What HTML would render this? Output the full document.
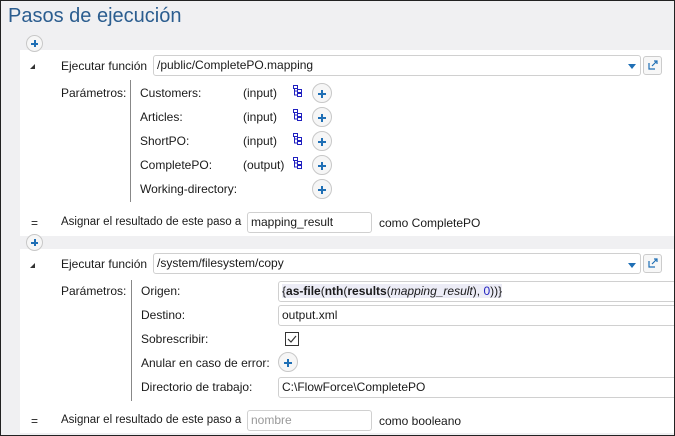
<!DOCTYPE html>
<html><head><meta charset="utf-8"><style>
*{margin:0;padding:0;box-sizing:border-box}
body{width:675px;height:436px;overflow:hidden;background:#f0f0f2;font-family:"Liberation Sans",sans-serif;font-size:12px;color:#1a1a1a;position:relative}
.frame{position:absolute;left:0;top:0;width:675px;height:436px;border:1px solid #222;pointer-events:none;z-index:9}
.a{position:absolute;white-space:nowrap}
.title{left:8px;top:5px;font-size:20px;color:#2b5d8f}
.panel{position:absolute;left:20px;width:655px;background:#fff}
.inp{position:absolute;background:#fff;border:1px solid #d0d0d0;border-radius:3px;padding-left:3px;line-height:19px;font-size:12px}
.pl{position:absolute;width:20px;height:20px;border:1px solid #c8c8c8;border-radius:50%;background:#f6f6f6}
.pl::before{content:"";position:absolute;left:5px;top:8.5px;width:8px;height:2px;background:#1f6fb5}
.pl::after{content:"";position:absolute;left:8px;top:5.5px;width:2px;height:8px;background:#1f6fb5}
.sm{width:17px;height:17px}
.sm::before{left:4px;top:6.5px;width:7px}
.sm::after{left:6.5px;top:4px;height:7px}
.vl{position:absolute;width:1px;background:#888}
.tri{position:absolute;width:0;height:0;border-left:5px solid transparent;border-bottom:5px solid #333}
.lnk{position:absolute;width:19px;height:19px;border:1px solid #ccc;border-radius:3px;background:#f7f7f7}
.dd{position:absolute;width:0;height:0;border-left:4px solid transparent;border-right:4px solid transparent;border-top:5px solid #1f6fb5}
.as{font-size:11.5px}
</style></head><body>
<div class="frame"></div>
<div class="a title">Pasos de ejecución</div>

<div class="panel" style="top:50px;height:186px"></div>
<div class="panel" style="top:249px;height:184px"></div>

<div class="pl sm" style="left:26px;top:35px"></div>
<div class="pl sm" style="left:26px;top:234px"></div>

<!-- step 1 -->
<div class="tri" style="left:30px;top:64px"></div>
<div class="a" style="left:61px;top:59px">Ejecutar función</div>
<div class="inp" style="left:153px;top:55px;width:488px;height:21px">/public/CompletePO.mapping</div>
<div class="dd" style="left:628px;top:64px"></div>
<div class="lnk" style="left:643px;top:56px"><svg width="17" height="17" viewBox="0 0 17 17"><path d="M5 6v6h6M8 9l5-5M10 4h3v3" stroke="#1f6fb5" fill="none" stroke-width="1.2"/></svg></div>
<div class="a" style="left:61px;top:86px">Parámetros:</div>
<div class="vl" style="left:130px;top:80px;height:122px"></div>
<div class="a" style="left:140px;top:86px">Customers:</div>
<div class="a" style="left:140px;top:110px">Articles:</div>
<div class="a" style="left:140px;top:134px">ShortPO:</div>
<div class="a" style="left:140px;top:158px">CompletePO:</div>
<div class="a" style="left:140px;top:182px">Working-directory:</div>
<div class="a" style="left:243px;top:86px">(input)</div>
<div class="a" style="left:243px;top:110px">(input)</div>
<div class="a" style="left:243px;top:134px">(input)</div>
<div class="a" style="left:243px;top:158px">(output)</div>
<svg class="a" style="left:292px;top:85px" width="11" height="95" viewBox="0 0 11 95">
<g fill="none" stroke="#2020c0" stroke-width="1"><g id="t"><rect x="1.5" y="0.5" width="4" height="3"/><rect x="5.5" y="4.5" width="4" height="3"/><rect x="5.5" y="8.5" width="4" height="3"/><path d="M2.5 3.5v6.5h3M2.5 6h3"/></g>
<use href="#t" y="24"/><use href="#t" y="48"/><use href="#t" y="72"/></g></svg>
<div class="pl" style="left:312px;top:83px"></div>
<div class="pl" style="left:312px;top:107px"></div>
<div class="pl" style="left:312px;top:131px"></div>
<div class="pl" style="left:312px;top:155px"></div>
<div class="pl" style="left:312px;top:179px"></div>
<div class="a" style="left:31px;top:216px">=</div>
<div class="a as" style="left:61px;top:216px">Asignar el resultado de este paso a</div>
<div class="inp" style="left:247px;top:212px;width:125px;height:21px">mapping_result</div>
<div class="a" style="left:379px;top:216px">como CompletePO</div>

<!-- step 2 -->
<div class="tri" style="left:30px;top:263px"></div>
<div class="a" style="left:61px;top:257px">Ejecutar función</div>
<div class="inp" style="left:153px;top:253px;width:488px;height:21px">/system/filesystem/copy</div>
<div class="dd" style="left:628px;top:263px"></div>
<div class="lnk" style="left:643px;top:254px"><svg width="17" height="17" viewBox="0 0 17 17"><path d="M5 6v6h6M8 9l5-5M10 4h3v3" stroke="#1f6fb5" fill="none" stroke-width="1.2"/></svg></div>
<div class="a" style="left:61px;top:284px">Parámetros:</div>
<div class="vl" style="left:131px;top:280px;height:121px"></div>
<div class="a" style="left:141px;top:284px">Origen:</div>
<div class="a" style="left:141px;top:308px">Destino:</div>
<div class="a" style="left:141px;top:332px">Sobrescribir:</div>
<div class="a" style="left:141px;top:356px">Anular en caso de error:</div>
<div class="a" style="left:141px;top:380px">Directorio de trabajo:</div>
<div class="inp" style="left:278px;top:281px;width:400px;height:21px"><span style="background:#ececf6">{<b>as-file</b>(<b>nth</b>(<b>results</b>(<i>mapping_result</i>), <span style="color:#2020c0">0</span>))}</span></div>
<div class="inp" style="left:278px;top:305px;width:400px;height:21px">output.xml</div>
<div class="a" style="left:285px;top:332px;width:14px;height:14px;border:1px solid #333;background:#fff"><svg width="12" height="12" viewBox="0 0 12 12"><path d="M2 6l3 3 5-6" stroke="#333" fill="none" stroke-width="1.2"/></svg></div>
<div class="pl" style="left:278px;top:352px"></div>
<div class="inp" style="left:278px;top:377px;width:400px;height:21px">C:\FlowForce\CompletePO</div>
<div class="a" style="left:31px;top:414px">=</div>
<div class="a as" style="left:61px;top:414px">Asignar el resultado de este paso a</div>
<div class="inp" style="left:247px;top:410px;width:125px;height:21px;color:#999">nombre</div>
<div class="a" style="left:379px;top:414px">como booleano</div>
</body></html>
